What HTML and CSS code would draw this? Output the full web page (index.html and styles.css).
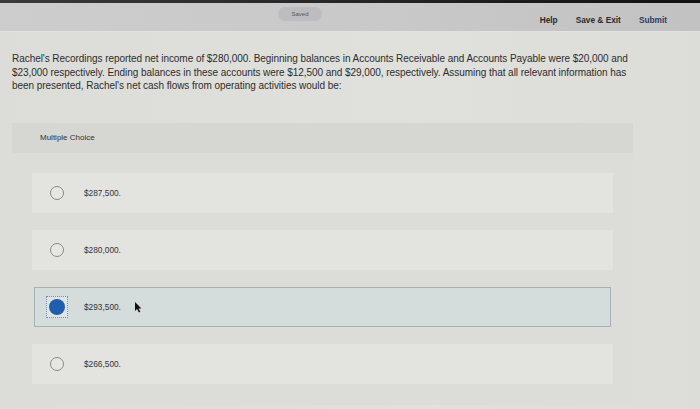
FILE: index.html
```html
<!DOCTYPE html>
<html>
<head>
<meta charset="utf-8">
<link rel="stylesheet" href="styles.css">
</head>
<body>
<div class="topstrip"></div>
<header class="header">
  <div class="saved">Saved</div>
  <nav class="nav">
    <span class="nav-item">Help</span>
    <span class="nav-item">Save &amp; Exit</span>
    <span class="nav-item submit">Submit</span>
  </nav>
</header>
<main class="main">
  <p class="question">Rachel's Recordings reported net income of $280,000. Beginning balances in Accounts Receivable and Accounts Payable were $20,000 and $23,000 respectively. Ending balances in these accounts were $12,500 and $29,000, respectively. Assuming that all relevant information has been presented, Rachel's net cash flows from operating activities would be:</p>
  <section class="panel">
    <div class="panel-head">Multiple Choice</div>
    <div class="options">
      <div class="option"><span class="radio"></span><span class="label">$287,500.</span></div>
      <div class="option"><span class="radio"></span><span class="label">$280,000.</span></div>
      <div class="option selected"><span class="radio-wrap"><span class="radio on"></span></span><span class="label">$293,500.</span><svg class="cursor" width="8" height="11" viewBox="0 0 8 11"><path d="M1 0 L1 9 L3 7 L5 10.5 L6.3 9.8 L4.5 6.5 L7.5 6.5 Z" fill="#111"/></svg></div>
      <div class="option"><span class="radio"></span><span class="label">$266,500.</span></div>
    </div>
  </section>
</main>
</body>
</html>
```
FILE: styles.css
```css
* { box-sizing: border-box; }
html, body { margin: 0; padding: 0; }
body {
  width: 700px;
  height: 409px;
  overflow: hidden;
  background: linear-gradient(to right, #dcddd8, #e0e0dc 60%, #dcdcd8);
  font-family: "Liberation Sans", Arial, sans-serif;
  color: #2a2a2a;
}
.topstrip {
  height: 3px;
  background: linear-gradient(to right, #3a3a3a, #222 60%, #111);
}
.header {
  height: 29px;
  background: linear-gradient(to right, #cdcdcd, #c8c8c8 60%, #c2c2c2);
  border-bottom: 1px solid #e2e2e0;
  display: flex;
  align-items: center;
  padding: 0 0 0 278px;
}
.saved {
  width: 44px;
  height: 14px;
  margin-top: -6px;
  border-radius: 7px;
  background: #bdbdbf;
  color: #555;
  font-size: 6px;
  line-height: 14px;
  text-align: center;
}
.nav {
  margin-left: auto;
  display: flex;
  gap: 18px;
  padding-right: 33px;
  margin-top: 5px;
  font-size: 8.3px;
  font-weight: bold;
}
.nav-item { color: #2b2b2b; }
.submit { color: #2e3a66; }
.main {
  padding: 20px 0 0 12px;
}
.question {
  margin: 0;
  width: 630px;
  font-size: 10px;
  line-height: 13.5px;
  letter-spacing: -0.05px;
  color: #2d2d2d;
}
.panel {
  margin-top: 30px;
  width: 621px;
  height: 282px;
  background: #dcdcd8;
}
.panel-head {
  height: 30px;
  background: #d6d6d3;
  padding: 10px 0 0 28px;
  font-size: 8px;
  color: #333;
}
.options {
  padding: 20px 20px 0 20px;
  display: flex;
  flex-direction: column;
  gap: 17px;
}
.option {
  height: 40px;
  display: flex;
  align-items: center;
  background: #e3e3df;
  padding-left: 18px;
  font-size: 8.3px;
  color: #333;
}
.radio {
  width: 14px;
  height: 14px;
  border-radius: 50%;
  border: 1px solid #8a8a8a;
  background: #e6e6e3;
  flex: none;
}
.label { margin-left: 20px; }
.option.selected {
  background: #d4dcdc;
  border: 1px solid #a3b2b5;
  margin-left: 2px;
  margin-right: 2px;
  padding-left: 0;
}
.radio-wrap {
  width: 22px;
  height: 22px;
  border: 1px dotted #7b8aa8;
  display: flex;
  align-items: center;
  justify-content: center;
  margin-left: 11px;
  margin-right: -4px;
  background: #dfe4e6;
}
.radio.on {
  width: 16px;
  height: 16px;
  background: #1f5fae;
  border: none;
}
.cursor { margin-left: 13px; margin-top: 2px; }
```
